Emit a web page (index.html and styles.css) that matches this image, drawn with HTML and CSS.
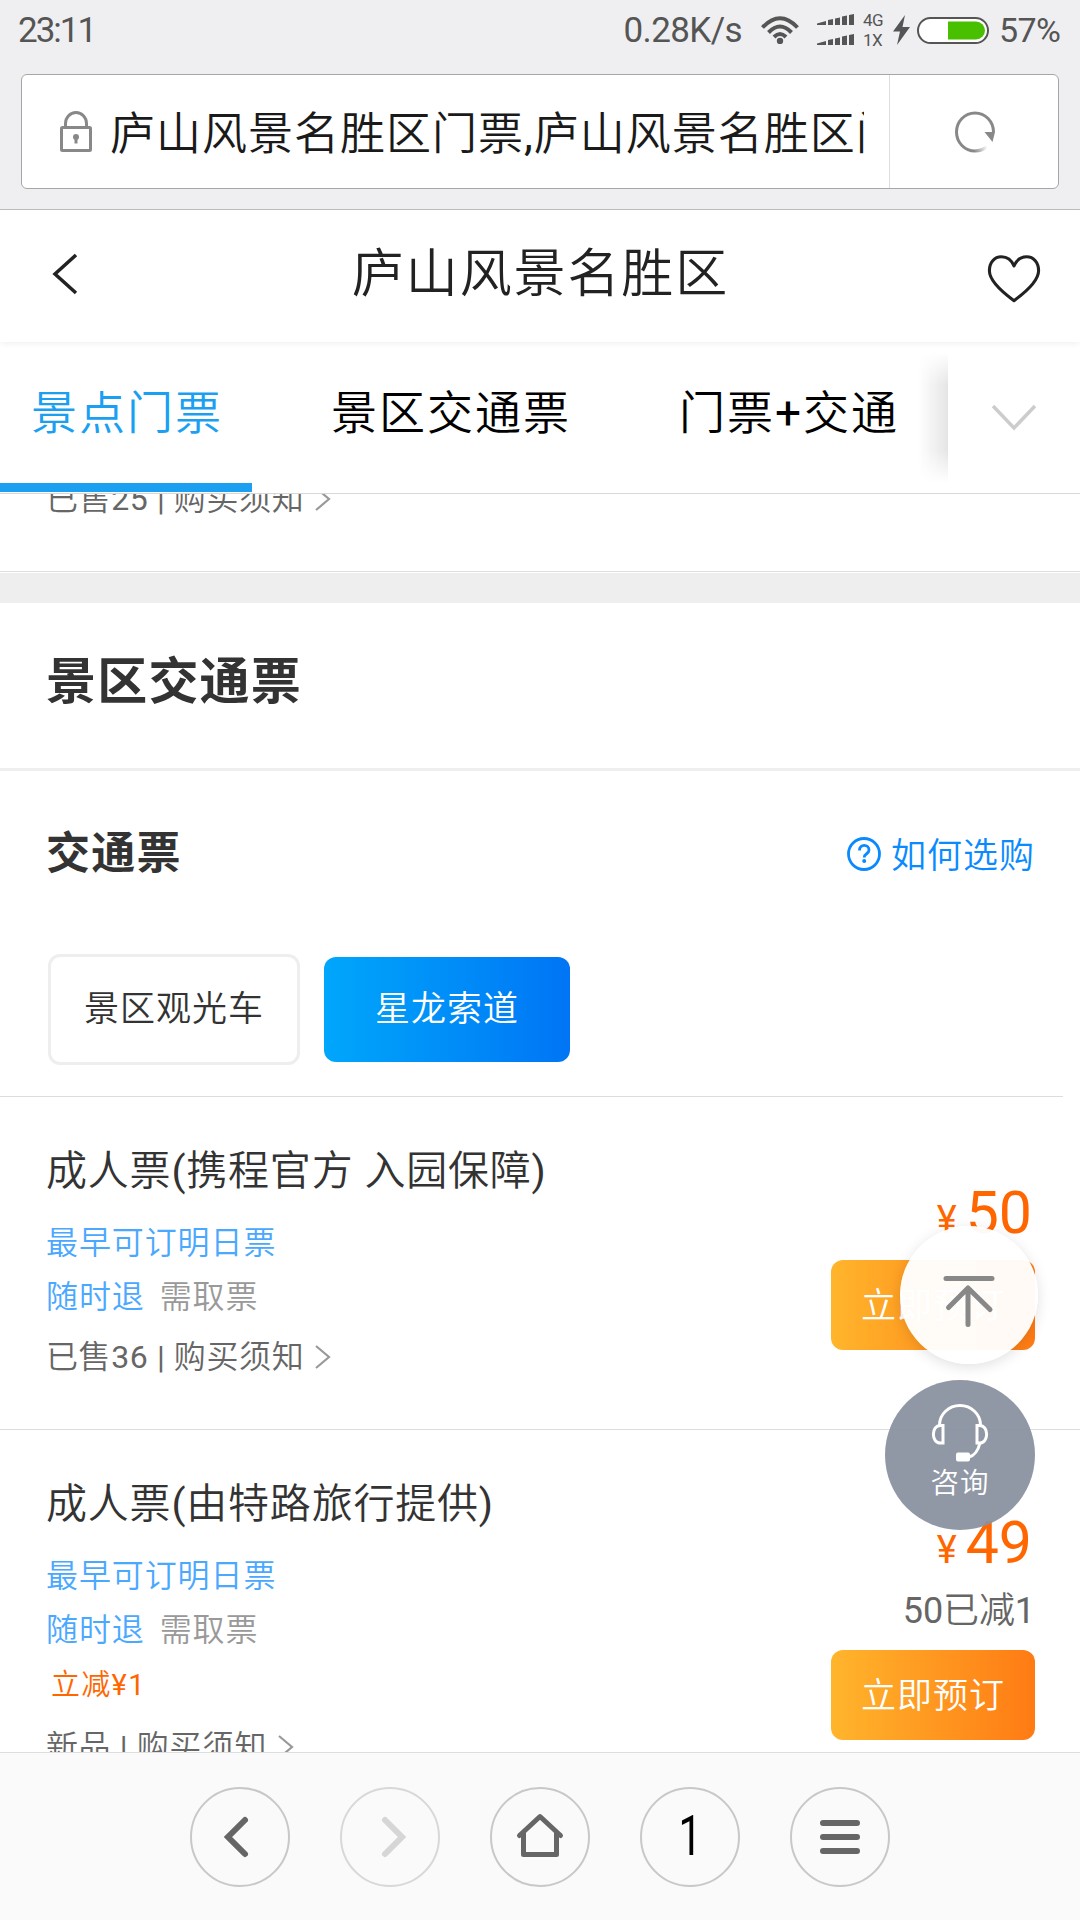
FILE: index.html
```html
<!DOCTYPE html>
<html lang="zh-CN">
<head>
<meta charset="utf-8">
<title>庐山风景名胜区</title>
<link rel="stylesheet" href="styles.css">
</head>
<body>
<div class="screen">
  <div class="chrome">
    <div class="status">
      <span class="clock">23:11</span>
      <span class="speed">0.28K/s</span>
      <svg class="wifi" width="38" height="28" viewBox="0 0 38 28" fill="none" stroke="#555" stroke-width="4">
        <path d="M1.5 11.5Q19-7 36.500 11.500M7.500 16.500Q19 4.500 30.500 16.500M13 21Q19 15 25 21"/>
        <circle cx="19" cy="25" r="3.200" fill="#555" stroke="none"/>
      </svg>
      <svg class="signal" width="38" height="32" viewBox="0 0 38 32" fill="#555">
        <path d="M0 11V9.500L9 7V11ZM11 11V6L16 5V11ZM18 11V4.500L23 3.500V11ZM25 11V2.500L30 1.500V11ZM32 11V1L37 0V11Z"/>
        <path d="M0 31V29.500L9 27V31ZM11 31V26L16 25V31ZM18 31V24.500L23 23.500V31ZM25 31V22.500L30 21.500V31ZM32 31V21L37 20V31Z"/>
      </svg>
      <span class="networks"><span>4G</span><span>1X</span></span>
      <svg class="bolt" width="17" height="30" viewBox="0 0 17 30"><path d="M12 0L0 16.500H7L4 30L17 12H9.500Z" fill="#555"/></svg>
      <svg class="battery" width="72" height="27" viewBox="0 0 72 27">
        <rect x="1" y="1" width="70" height="25" rx="12.500" fill="#fff" stroke="#555" stroke-width="2"/>
        <path d="M31 4.500H59A9 9 0 0 1 59 22.500H31Z" fill="#48c000"/>
      </svg>
      <span class="percent">57%</span>
    </div>
    <div class="address">
      <div class="address-main">
        <svg class="lock" width="32" height="41" viewBox="0 0 32 41" fill="none" stroke="#888" stroke-width="3">
          <path d="M5.500 17V12.500A10.500 11 0 0 1 26.500 12.500V17"/>
          <rect x="1.500" y="16.500" width="29" height="23" rx="1"/>
          <circle cx="16" cy="26" r="3" fill="#888" stroke="none"/>
          <path d="M16 26V32.500"/>
        </svg>
        <div class="url">庐山风景名胜区门票,庐山风景名胜区门票</div>
      </div>
      <div class="reload">
        <svg width="42" height="42" viewBox="0 0 42 42" fill="none">
          <defs><linearGradient id="fade" gradientUnits="userSpaceOnUse" x1="20" y1="40" x2="33" y2="35"><stop offset="0" stop-color="#888"/><stop offset="1" stop-color="#888" stop-opacity="0"/></linearGradient></defs>
          <path d="M39.500 21A18.500 19 0 1 0 21 40" stroke="#888" stroke-width="3"/>
          <path d="M21 40A18.500 18.500 0 0 0 33 35.500" stroke="url(#fade)" stroke-width="3"/>
          <path d="M30.500 21H41L38.500 31Z" fill="#888"/>
        </svg>
      </div>
    </div>
  </div>

  <header class="header">
    <svg width="26" height="42" viewBox="0 0 26 42" fill="none" stroke="#222" stroke-width="3.500"><path d="M24 2L3 21L24 40"/></svg>
    <h1>庐山风景名胜区</h1>
    <svg class="heart" width="54" height="49" viewBox="0 0 56 50" fill="none" stroke="#222" stroke-width="3.200" stroke-linejoin="round"><path d="M28 12C25 5 20 2.500 15 2.500C7.500 2.500 2.500 8.500 2.500 17C2.500 27 15 38.500 28 48C41 38.500 53.500 27 53.500 17C53.500 8.500 48.500 2.500 41 2.500C36 2.500 31 5 28 12Z"/></svg>
  </header>

  <nav class="tabs">
    <div class="tab-list">
      <span class="tab active">景点门票</span>
      <span class="tab">景区交通票</span>
      <span class="tab">门票+交通</span>
    </div>
    <div class="more">
      <svg width="44" height="28" viewBox="0 0 44 28" fill="none" stroke="#ccc" stroke-width="3.500"><path d="M1 2L22 24L43 2"/></svg>
    </div>
  </nav>

  <main class="content">
    <div class="previous">
      <div class="notice">已售25 | 购买须知<svg width="16" height="24" viewBox="0 0 16 24"><path d="M1 1L14 12L1 23"/></svg></div>
    </div>
    <h2>景区交通票</h2>
    <section class="group">
      <div class="group-head">
        <h3>交通票</h3>
        <a class="help">
          <svg width="34" height="34" viewBox="0 0 34 34" fill="none" stroke="#0a8aff" stroke-width="2.800"><circle cx="17" cy="17" r="15.500"/><path d="M12.500 13.500C12.500 6.500 22 7 22 13C22 17 17.200 16.500 17.200 20.500"/><circle cx="17.200" cy="24" r="2" fill="#0a8aff" stroke="none"/></svg>
          如何选购
        </a>
      </div>
      <div class="chips">
        <span class="chip">景区观光车</span>
        <span class="chip selected">星龙索道</span>
      </div>
    </section>

    <article class="ticket first">
      <div class="info">
        <div class="name">成人票(携程官方 入园保障)</div>
        <div class="tag">最早可订明日票</div>
        <div class="tag"><span>随时退</span><span class="muted">需取票</span></div>
        <div class="notice">已售36 | 购买须知<svg width="16" height="24" viewBox="0 0 16 24"><path d="M1 1L14 12L1 23"/></svg></div>
      </div>
      <div class="buy">
        <div class="price"><small>¥</small>50</div>
        <div class="book">立即预订</div>
      </div>
    </article>

    <article class="ticket discounted">
      <div class="info">
        <div class="name">成人票(由特路旅行提供)</div>
        <div class="tag">最早可订明日票</div>
        <div class="tag"><span>随时退</span><span class="muted">需取票</span></div>
        <div class="promo">立减¥1</div>
        <div class="notice">新品 | 购买须知<svg width="16" height="24" viewBox="0 0 16 24"><path d="M1 1L14 12L1 23"/></svg></div>
      </div>
      <div class="buy">
        <div class="price"><small>¥</small>49</div>
        <div class="saved">50已减1</div>
        <div class="book">立即预订</div>
      </div>
    </article>
  </main>

  <footer class="toolbar">
    <span class="key"><svg width="96" height="96" viewBox="0 0 96 96" fill="none" stroke="#666" stroke-width="6" stroke-linecap="round"><path d="M53 31L36 48L53 65"/></svg></span>
    <span class="key off"><svg width="96" height="96" viewBox="0 0 96 96" fill="none" stroke="#d6d6d6" stroke-width="6" stroke-linecap="round"><path d="M43 31L60 48L43 65"/></svg></span>
    <span class="key"><svg width="96" height="96" viewBox="0 0 96 96" fill="none" stroke="#666" stroke-width="5" stroke-linecap="round" stroke-linejoin="round"><path d="M27.500 46.500L48 27.500L68.500 46.500M31.500 44V65.500H64.500V44"/></svg></span>
    <span class="key count"><span>1</span></span>
    <span class="key"><svg width="96" height="96" viewBox="0 0 96 96" stroke="#666" stroke-width="6" stroke-linecap="round"><path d="M31 34H65M31 48H65M31 62H65"/></svg></span>
  </footer>

  <div class="to-top">
    <svg width="138" height="138" viewBox="0 0 138 138" fill="none" stroke="#888" stroke-width="5" stroke-linecap="round" stroke-linejoin="round"><path d="M46 52.500H92M68 98.500V62.500M48.500 81.500L68 62L90 83.500"/></svg>
  </div>
  <div class="consult">
    <svg width="58" height="58" viewBox="0 0 58 58" fill="none" stroke="#fff" stroke-width="3"><path d="M8.500 21A20.500 19.500 0 0 1 49.500 21M12 21.500V39H9.500C0 39 0 21.500 9.500 21.500ZM46 21.500V39H48.500C58 39 58 21.500 48.500 21.500ZM49 39Q46 51 38 53"/><rect x="25" y="48.500" width="14" height="9" rx="2" fill="#fff" stroke="none"/></svg>
    <span>咨询</span>
  </div>
</div>
</body>
</html>
```
FILE: styles.css
```css
* { box-sizing: border-box; margin: 0; padding: 0; }
body { font-family: Roboto, "Noto Sans CJK SC DemiLight", "Noto Sans CJK SC", sans-serif; font-weight: 400; color: #333; background: #fff; }
svg { display: block; flex: none; }

.screen { position: relative; width: 1080px; height: 1920px; overflow: hidden; display: flex; flex-direction: column; }

.chrome { flex: none; height: 210px; background: #efeff1; border-bottom: 1px solid #bcbcbc; padding: 0 21px; }
.status { height: 74px; display: flex; align-items: flex-start; color: #555; font-size: 35px; line-height: 36px; padding-top: 13px; margin: 0 -2px; letter-spacing: -.6px; }
.clock { flex: 1; letter-spacing: -2px; margin-left: -1px; }
.speed { margin-right: 19px; }
.wifi { margin: 3px 18px 0 0; }
.signal { margin: 1px 8px 0 0; }
.networks { display: flex; flex-direction: column; width: 22px; font-size: 17px; line-height: 20px; margin: -3px 8px 0 0; letter-spacing: -.5px; }
.bolt { margin: 2px 7px 0 0; }
.battery { margin: 4px 10px 0 0; }
.percent { width: 62px; font-size: 34px; margin-top: -1px; }

.address { height: 115px; display: flex; background: #fff; border: 1px solid #a6a6a6; border-radius: 6px; }
.address-main { flex: 1; display: flex; align-items: center; padding: 0 25px 0 38px; border-right: 1px solid #ddd; overflow: hidden; }
.lock { margin-right: 18px; }
.url { flex: 1; overflow: hidden; white-space: nowrap; font-size: 45px; letter-spacing: 1px; line-height: 60px; padding-top: 6px; color: #1a1a1a; }
.reload { width: 168px; display: flex; align-items: center; justify-content: center; padding-left: 2px; }

.header { position: relative; z-index: 2; flex: none; height: 132px; display: flex; align-items: center; justify-content: space-between; padding: 0 39px 4px 52px; background: #fff; box-shadow: 0 3px 6px -1px rgba(0,0,0,.06); color: #222; }
.header h1 { font-size: 52px; font-weight: 400; letter-spacing: 1.900px; margin: -10px 0 0 16px; }
.heart { margin-top: 9px; }

.tabs { flex: none; display: flex; height: 152px; border-bottom: 1px solid #d8d8d8; background: #fff; overflow: hidden; }
.tab-list { flex: 1; display: flex; gap: 48px; }
.tab { height: 150px; padding: 0 29px 0 31px; font-size: 46px; letter-spacing: 2px; line-height: 142px; white-space: nowrap; color: #000; }
.tab.active { color: #1a9ff1; border-bottom: 9px solid #1a9ff1; }
.more { position: relative; width: 132px; display: flex; align-items: center; justify-content: center; background: #fff; }
.more::before { content: ""; position: absolute; right: 132px; top: 10px; bottom: 10px; width: 30px; background: linear-gradient(to left, rgba(0,0,0,.1), rgba(0,0,0,0)); -webkit-mask-image: linear-gradient(transparent, #000 25%, #000 75%, transparent); }

.content { flex: 1; min-height: 0; overflow: hidden; }
.previous { margin-top: -15px; padding: 0 46px 52px; border-bottom: 1px solid #ddd; }
.notice { display: flex; align-items: center; height: 40px; line-height: 40px; font-size: 32px; letter-spacing: .6px; color: #666; white-space: pre; }
.notice svg { margin-left: 11px; fill: none; stroke: #999; stroke-width: 2.200; }
h2, h3 { font-family: Roboto, "Noto Sans CJK SC", sans-serif; font-weight: 700; letter-spacing: 1.200px; }
h2 { margin-top: 1px; height: 198px; border-top: 30px solid #eee; border-bottom: 3px solid #eee; padding-left: 46px; line-height: 158px; font-size: 50px; }
.group { height: 325px; padding: 0 45px 0 46px; }
.group-head { display: flex; justify-content: space-between; align-items: center; height: 168px; padding-bottom: 6px; }
h3 { font-size: 44px; line-height: 60px; margin-top: 3px; }
.help { display: flex; align-items: center; gap: 10px; font-size: 35px; letter-spacing: 1px; color: #0a8aff; }
.help svg { margin-top: 3px; }
.chips { display: flex; align-items: center; gap: 24px; margin: 15px 0 0 2px; }
.chip { width: 252px; height: 111px; border: 3px solid #eee; border-radius: 12px; text-align: center; line-height: 105px; font-size: 35px; letter-spacing: 1px; }
.chip.selected { width: 246px; height: 105px; border: 0; color: #fff; background: linear-gradient(90deg, #00a7fb, #0075f5); }

.ticket { display: flex; justify-content: space-between; padding: 44px 45px 51px 46px; border-top: 1px solid #ddd; }
.ticket.first { height: 333px; border-image: linear-gradient(90deg, #ddd 1062px, transparent 1062px) 1; }
.name { font-size: 41px; letter-spacing: .8px; line-height: 60px; margin-bottom: 15px; }
.tag { display: flex; gap: 15px; font-size: 32px; letter-spacing: .9px; line-height: 54px; color: #4aa8ff; }
.muted { color: #999; }
.first .notice { margin-top: 13px; }
.promo { padding-left: 5px; font-size: 29px; letter-spacing: 1.300px; line-height: 56px; height: 54px; color: #ff6600; }
.discounted .notice { margin-top: 16px; }

.buy { width: 204px; display: flex; flex-direction: column; }
.price { margin-top: 42px; height: 60px; line-height: 60px; font-size: 59px; text-align: right; padding-right: 3px; color: #ff6600; }
.discounted .price { margin-top: 38px; line-height: 62px; }
.price small { font-size: 38px; margin-right: 9px; }
.saved { margin-top: 17px; height: 44px; line-height: 44px; text-align: right; font-size: 36px; letter-spacing: -.1px; padding-right: 0; color: #666; }
.book { margin-top: 17px; height: 90px; border-radius: 12px; background: linear-gradient(90deg, #ffb52c, #ff7b14); color: #fff; font-size: 35px; letter-spacing: 1px; line-height: 93px; text-align: center; }

.toolbar { flex: none; height: 168px; background: #fafafa; border-top: 1px solid #ddd; display: flex; justify-content: center; gap: 50px; padding-top: 34px; }
.key { width: 100px; height: 100px; border: 2px solid #c8c8c8; border-radius: 50%; text-align: center; }
.key.off { border-color: #d8d8d8; }
.key.count { font: 400 55px/94px Roboto, sans-serif; color: #000; }
.count span { display: block; transform: scaleX(.75); }

.to-top { position: absolute; z-index: 3; left: 900px; top: 1226px; width: 138px; height: 138px; border-radius: 50%; background: rgba(255,255,255,.96); box-shadow: 0 3px 14px rgba(0,0,0,.12); }
.consult { position: absolute; z-index: 3; left: 885px; top: 1380px; width: 150px; height: 150px; border-radius: 50%; background: rgba(138,146,159,.94); color: #fff; display: flex; flex-direction: column; align-items: center; padding-top: 24px; }
.consult span { font-size: 28.500px; letter-spacing: 1px; line-height: 40px; margin: 2px 0 0 0; }
```
